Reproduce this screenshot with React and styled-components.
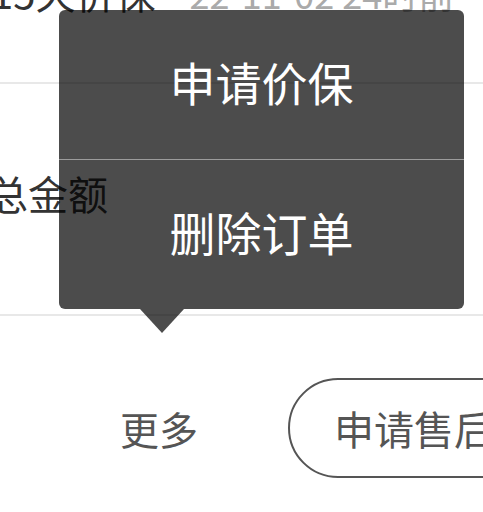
import React from "react";
import styled, { createGlobalStyle } from "styled-components";

const GlobalStyle = createGlobalStyle`
  html, body {
    margin: 0;
    padding: 0;
    background: #fff;
  }
  body {
    font-family: "Noto Sans CJK SC", "Noto Sans", sans-serif;
  }
`;

const Page = styled.div`
  position: relative;
  width: 483px;
  height: 512px;
  overflow: hidden;
  background: #fff;
`;

const InfoRow = styled.div`
  display: flex;
  align-items: baseline;
  gap: 34px;
  height: 110px;
  margin-top: -28px;
  margin-left: -9px;
  white-space: nowrap;
`;

const InfoTitle = styled.span`
  font-size: 40px;
  line-height: 40px;
  color: #333;
`;

const InfoDate = styled.span`
  font-size: 36px;
  line-height: 40px;
  color: #aaa;
`;

const Divider = styled.div`
  height: 2px;
  background: #e8e8e8;
`;

const TotalRow = styled.div`
  height: 230px;
  padding-top: 89px;
  box-sizing: border-box;
  margin-left: -12px;
`;

const TotalLabel = styled.span`
  font-size: 40px;
  line-height: 40px;
  color: #333;
`;

const ActionRow = styled.div`
  display: flex;
  align-items: center;
  padding-top: 62px;
  padding-left: 120px;
  gap: 90px;
  white-space: nowrap;
`;

const MoreLink = styled.span`
  font-size: 39px;
  line-height: 40px;
  color: #555;
`;

const OutlineButton = styled.button`
  flex-shrink: 0;
  height: 100px;
  padding: 0 40px 0 44px;
  border: 2px solid #555;
  border-radius: 50px;
  background: #fff;
  color: #555;
  font-family: inherit;
  font-size: 40px;
  line-height: 40px;
  white-space: nowrap;
`;

const Popover = styled.div`
  position: absolute;
  left: 59px;
  top: 10px;
  width: 405px;
  height: 299px;
  display: flex;
  flex-direction: column;
  border-radius: 6px;
  background: rgba(0, 0, 0, 0.7);

  &::after {
    content: "";
    position: absolute;
    left: 81px;
    top: 100%;
    border-left: 22px solid transparent;
    border-right: 22px solid transparent;
    border-top: 24px solid rgba(0, 0, 0, 0.7);
  }
`;

const MenuItem = styled.div`
  flex: 1;
  display: flex;
  align-items: center;
  justify-content: center;
  padding-bottom: 7px;
  color: #fff;
  font-size: 46px;
  line-height: 46px;
  border-top: ${(p) => (p.$first ? "none" : "1px solid rgba(255, 255, 255, 0.45)")};
`;

export default function App() {
  return (
    <>
      <GlobalStyle />
      <Page>
        <InfoRow>
          <InfoTitle>15天价保</InfoTitle>
          <InfoDate>22-11-02 24时前</InfoDate>
        </InfoRow>
        <Divider />
        <TotalRow>
          <TotalLabel>总金额</TotalLabel>
        </TotalRow>
        <Divider />
        <ActionRow>
          <MoreLink>更多</MoreLink>
          <OutlineButton>申请售后</OutlineButton>
        </ActionRow>
        <Popover>
          <MenuItem $first>申请价保</MenuItem>
          <MenuItem>删除订单</MenuItem>
        </Popover>
      </Page>
    </>
  );
}
